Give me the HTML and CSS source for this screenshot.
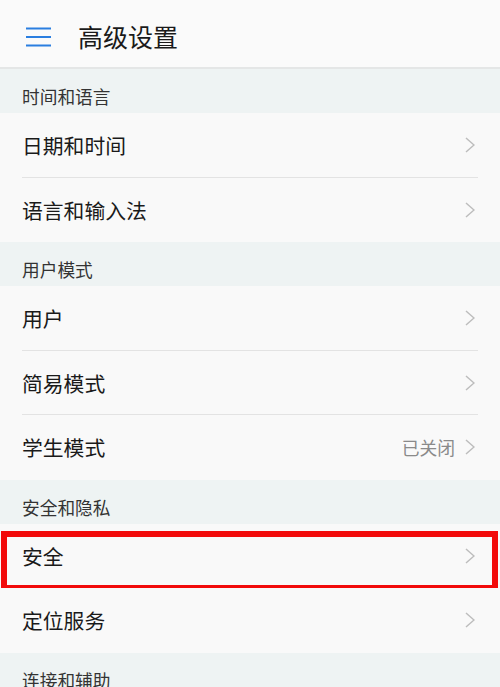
FILE: index.html
```html
<!DOCTYPE html>
<html lang="zh-CN">
<head>
<meta charset="utf-8">
<title>高级设置</title>
<link rel="stylesheet" href="styles.css">
</head>
<body>
<header class="topbar">
  <svg class="menu-icon" width="25" height="20" viewBox="0 0 25 20" aria-hidden="true">
    <rect x="0" y="0.5" width="25" height="2" fill="#2a7ee0"/>
    <rect x="0" y="9" width="25" height="2" fill="#2a7ee0"/>
    <rect x="0" y="17.5" width="25" height="2" fill="#2a7ee0"/>
  </svg>
  <h1 class="title">高级设置</h1>
</header>

<main class="list">
  <div class="section">时间和语言</div>
  <div class="row divided"><span class="label">日期和时间</span><span class="trail"><svg class="chev" width="10" height="16" viewBox="0 0 10 16"><path d="M1 1 L9 8 L1 15" fill="none" stroke="#bdbdbd" stroke-width="1.5"/></svg></span></div>
  <div class="row"><span class="label">语言和输入法</span><span class="trail"><svg class="chev" width="10" height="16" viewBox="0 0 10 16"><path d="M1 1 L9 8 L1 15" fill="none" stroke="#bdbdbd" stroke-width="1.5"/></svg></span></div>

  <div class="section">用户模式</div>
  <div class="row divided"><span class="label">用户</span><span class="trail"><svg class="chev" width="10" height="16" viewBox="0 0 10 16"><path d="M1 1 L9 8 L1 15" fill="none" stroke="#bdbdbd" stroke-width="1.5"/></svg></span></div>
  <div class="row divided"><span class="label">简易模式</span><span class="trail"><svg class="chev" width="10" height="16" viewBox="0 0 10 16"><path d="M1 1 L9 8 L1 15" fill="none" stroke="#bdbdbd" stroke-width="1.5"/></svg></span></div>
  <div class="row"><span class="label">学生模式</span><span class="trail"><span class="value">已关闭</span><svg class="chev" width="10" height="16" viewBox="0 0 10 16"><path d="M1 1 L9 8 L1 15" fill="none" stroke="#bdbdbd" stroke-width="1.5"/></svg></span></div>

  <div class="section">安全和隐私</div>
  <div class="row highlighted"><span class="label">安全</span><span class="trail"><svg class="chev" width="10" height="16" viewBox="0 0 10 16"><path d="M1 1 L9 8 L1 15" fill="none" stroke="#bdbdbd" stroke-width="1.5"/></svg></span><span class="redbox"></span></div>
  <div class="row"><span class="label">定位服务</span><span class="trail"><svg class="chev" width="10" height="16" viewBox="0 0 10 16"><path d="M1 1 L9 8 L1 15" fill="none" stroke="#bdbdbd" stroke-width="1.5"/></svg></span></div>

  <div class="section">连接和辅助</div>
</main>
</body>
</html>
```
FILE: styles.css
```css
html, body {
  margin: 0;
  padding: 0;
}
body {
  width: 500px;
  height: 687px;
  overflow: hidden;
  background: #f9f9f9;
  font-family: "Noto Sans CJK SC", "Noto Sans", sans-serif;
  color: #1a1a1a;
}
.topbar {
  box-sizing: border-box;
  height: 69px;
  padding: 6px 0 0 26px;
  display: flex;
  align-items: center;
  background: #fafafa;
  border-bottom: 2px solid #e4e6e6;
}
.menu-icon {
  display: block;
  flex: none;
}
.title {
  margin: 0 0 0 27px;
  font-size: 25px;
  font-weight: 400;
  color: #1a1a1a;
  line-height: 1;
}
.list {
  display: flex;
  flex-direction: column;
}
.section {
  box-sizing: border-box;
  height: 44px;
  padding: 10px 22px 0;
  display: flex;
  align-items: center;
  background: #eef3f3;
  font-size: 17.7px;
  color: #333;
}
.row {
  position: relative;
  box-sizing: border-box;
  height: 64.5px;
  padding: 0 25px 0 22px;
  display: flex;
  align-items: center;
  justify-content: space-between;
  background: #f9f9f9;
}
.row.divided::after {
  content: "";
  position: absolute;
  left: 22px;
  right: 22px;
  bottom: 0;
  height: 1px;
  background: #e3e3e3;
}
.label {
  font-size: 20.8px;
  color: #1a1a1a;
}
.trail {
  display: flex;
  align-items: center;
  gap: 10px;
}
.value {
  font-size: 17.8px;
  color: #8a8a8a;
}
.chev {
  display: block;
}
.redbox {
  position: absolute;
  left: 1px;
  top: 7px;
  width: 497px;
  height: 60px;
  box-sizing: border-box;
  border: 6px solid #f20a0a;
  pointer-events: none;
}
```
